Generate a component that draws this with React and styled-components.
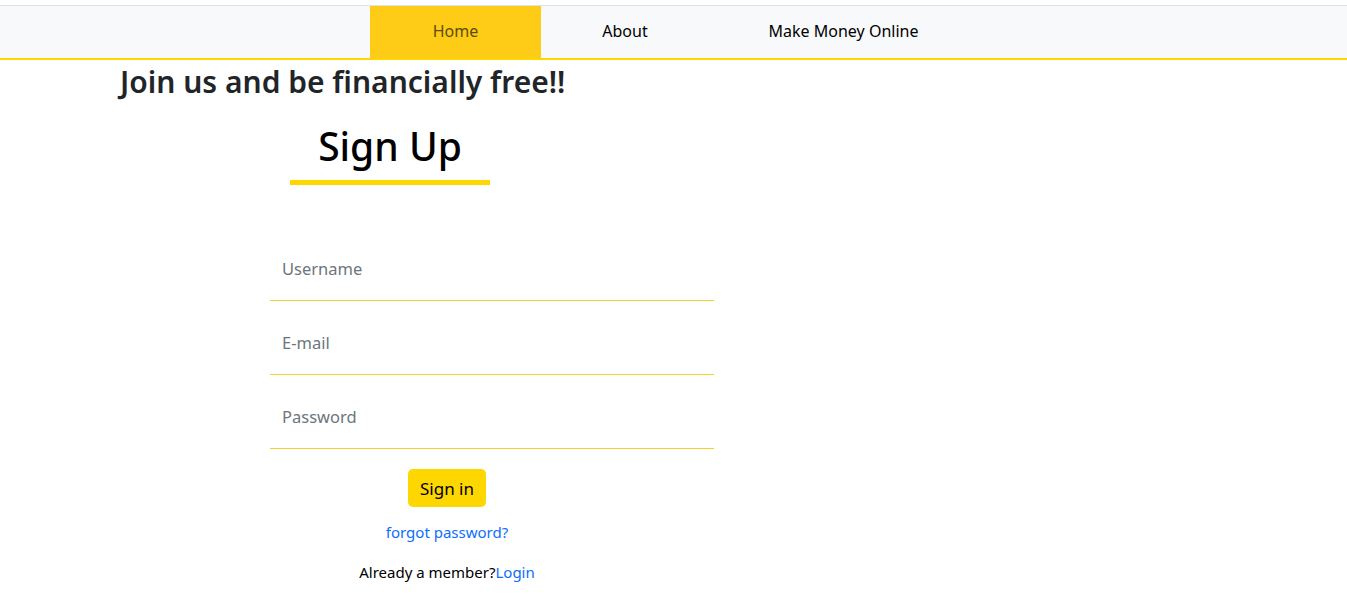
import styled, { createGlobalStyle } from 'styled-components'

const Global = createGlobalStyle`
  * { box-sizing: border-box; }
  body {
    margin: 0;
    background: #fff;
    font-family: "Noto Sans", "Open Sans", sans-serif;
    color: #212529;
  }
`

const Page = styled.div`
  padding-top: 5px;
`

const Navbar = styled.nav`
  display: flex;
  height: 55px;
  padding-left: 370px;
  background: #f8f9fa;
  border-top: 1px solid #dee2e6;
  border-bottom: 2px solid #ffd700;
`

const NavLink = styled.a`
  display: flex;
  align-items: center;
  justify-content: center;
  width: ${p => p.$w}px;
  height: 52px;
  padding-bottom: 2px;
  font-size: 16px;
  text-decoration: none;
  color: ${p => (p.$active ? '#5c4b0f' : '#000')};
  background: ${p => (p.$active ? '#fecb16' : 'transparent')};
`

const Main = styled.main`
  padding-left: 120px;
`

const Tagline = styled.h2`
  margin: 4px 0 0;
  font-size: 30px;
  font-weight: 600;
  line-height: 36px;
  color: #212529;
`

const Form = styled.form`
  display: flex;
  flex-direction: column;
  margin-left: 150px;
  width: 444px;
`

const TitleBlock = styled.div`
  width: 200px;
  margin: 22px 0 0 20px;
  text-align: center;
`

const Title = styled.h1`
  margin: 0;
  font-size: 39px;
  font-weight: 500;
  line-height: 48px;
  color: #000;
`

const Bar = styled.div`
  height: 5px;
  margin-top: 10px;
  background: #ffd700;
`

const Fields = styled.div`
  display: flex;
  flex-direction: column;
  gap: 10px;
  margin-top: 52px;
`

const Input = styled.input`
  height: 64px;
  padding: 0 12px;
  border: none;
  border-bottom: 1px solid #f2d230;
  outline: none;
  font-family: inherit;
  font-size: 16.5px;
  color: #212529;
  &::placeholder { color: #6c757d; }
`

const Footer = styled.div`
  display: flex;
  flex-direction: column;
  align-items: center;
  width: 354px;
`

const Button = styled.button`
  margin-top: 20px;
  height: 38px;
  padding: 0 12px;
  border: none;
  border-radius: 5px;
  background: #ffd700;
  font-family: inherit;
  font-size: 17px;
  color: #000;
`

const Link = styled.a`
  color: #0d6efd;
  text-decoration: none;
`

const Forgot = styled(Link)`
  margin-top: 14px;
  font-size: 15px;
  line-height: 22px;
`

const Member = styled.p`
  margin: 18px 0 0;
  font-size: 15px;
  line-height: 22px;
  color: #000;
`

export default function App() {
  return (
    <Page>
      <Global />
      <Navbar>
        <NavLink href="#" $active $w={171}>Home</NavLink>
        <NavLink href="#" $w={168}>About</NavLink>
        <NavLink href="#" $w={269}>Make Money Online</NavLink>
      </Navbar>
      <Main>
        <Tagline>Join us and be financially free!!</Tagline>
        <Form onSubmit={e => e.preventDefault()}>
          <TitleBlock>
            <Title>Sign Up</Title>
            <Bar />
          </TitleBlock>
          <Fields>
            <Input type="text" placeholder="Username" />
            <Input type="email" placeholder="E-mail" />
            <Input type="password" placeholder="Password" />
          </Fields>
          <Footer>
            <Button type="submit">Sign in</Button>
            <Forgot href="#">forgot password?</Forgot>
            <Member>Already a member?<Link href="#">Login</Link></Member>
          </Footer>
        </Form>
      </Main>
    </Page>
  )
}
